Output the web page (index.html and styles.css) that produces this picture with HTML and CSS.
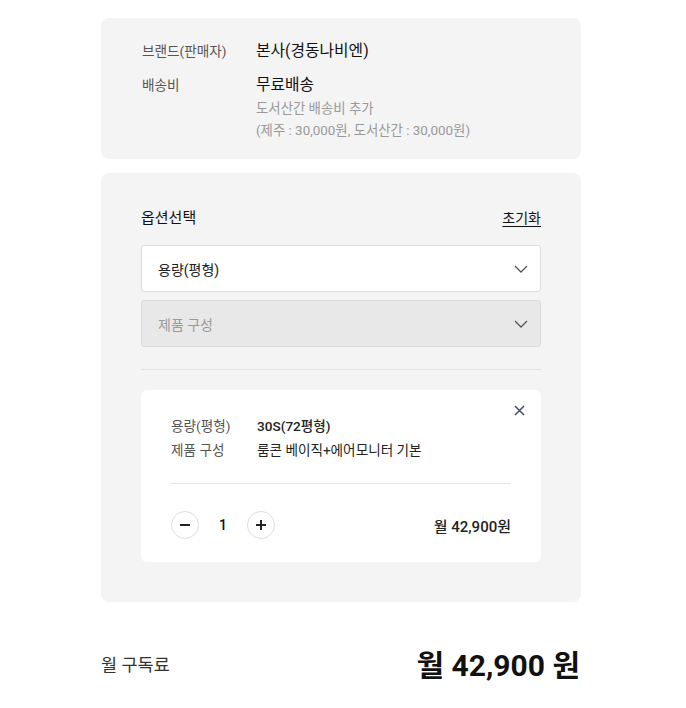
FILE: index.html
```html
<!DOCTYPE html>
<html lang="ko">
<head>
    <meta charset="UTF-8">
    <meta name="viewport" content="width=device-width, initial-scale=1.0">
    <title>구독 옵션</title>
    <link rel="stylesheet" href="styles.css">
</head>
<body>
    <div class="container">
        <!-- 판매자 / 배송 정보 -->
        <div class="info-box">
            <div class="info-row">
                <span class="info-label">브랜드(판매자)</span>
                <div class="info-value">
                    <p class="value-main">본사(경동나비엔)</p>
                </div>
            </div>
            <div class="info-row">
                <span class="info-label">배송비</span>
                <div class="info-value">
                    <p class="value-main">무료배송</p>
                    <p class="value-sub">도서산간 배송비 추가</p>
                    <p class="value-sub">(제주 : 30,000원, 도서산간 : 30,000원)</p>
                </div>
            </div>
        </div>

        <!-- 옵션 선택 -->
        <div class="option-box">
            <div class="option-head">
                <h3 class="option-title">옵션선택</h3>
                <a href="#" class="reset-link">초기화</a>
            </div>
            <div class="select-list">
                <button class="select">
                    <span>용량(평형)</span>
                    <svg class="chevron" width="14" height="8" viewBox="0 0 14 8"><path d="M1 1l6 6 6-6" fill="none" stroke="#555" stroke-width="1.3"/></svg>
                </button>
                <button class="select select-disabled">
                    <span>제품 구성</span>
                    <svg class="chevron" width="14" height="8" viewBox="0 0 14 8"><path d="M1 1l6 6 6-6" fill="none" stroke="#555" stroke-width="1.3"/></svg>
                </button>
            </div>

            <div class="selected-item">
                <button class="remove-btn" aria-label="삭제">
                    <svg width="11" height="11" viewBox="0 0 11 11"><path d="M1 1l9 9M10 1l-9 9" stroke="#3d4f6b" stroke-width="1.5"/></svg>
                </button>
                <dl class="item-spec">
                    <dt>용량(평형)</dt>
                    <dd class="spec-strong">30S(72평형)</dd>
                    <dt>제품 구성</dt>
                    <dd>룸콘 베이직+에어모니터 기본</dd>
                </dl>
                <div class="item-foot">
                    <div class="qty">
                        <button class="qty-btn">
                            <svg width="12" height="12" viewBox="0 0 12 12"><path d="M1 6h10" stroke="#222" stroke-width="2"/></svg>
                        </button>
                        <span class="qty-num">1</span>
                        <button class="qty-btn">
                            <svg width="12" height="12" viewBox="0 0 12 12"><path d="M1 6h10M6 1v10" stroke="#222" stroke-width="2"/></svg>
                        </button>
                    </div>
                    <span class="item-price">월 42,900원</span>
                </div>
            </div>
        </div>

        <!-- 합계 -->
        <div class="total">
            <span class="total-label">월 구독료</span>
            <span class="total-price">월 42,900 원</span>
        </div>
    </div>
</body>
</html>
```

FILE: styles.css
```css
body {
    font-family: Roboto, "Noto Sans CJK KR", sans-serif;
    background-color: #ffffff;
    color: #111;
    margin: 0;
    padding: 0;
}

p, h3, dl, dd {
    margin: 0;
}

.container {
    width: 480px;
    margin: 18px 0 0 101px;
}

/* 판매자 정보 */
.info-box {
    background-color: #f4f4f4;
    border-radius: 8px;
    padding: 22px 40px 17px 41px;
    display: flex;
    flex-direction: column;
    gap: 12px;
}

.info-row {
    display: flex;
}

.info-label {
    width: 114px;
    font-size: 13.6px;
    line-height: 22px;
    color: #555;
}

.value-main {
    font-size: 15.8px;
    line-height: 22px;
    color: #111;
}

.value-sub {
    font-size: 13.4px;
    line-height: 22px;
    color: #999;
}

.value-main + .value-sub {
    margin-top: 2px;
}

/* 옵션 선택 */
.option-box {
    background-color: #f4f4f4;
    border-radius: 8px;
    margin-top: 14px;
    padding: 34px 40px 40px;
}

.option-head {
    display: flex;
    justify-content: space-between;
    align-items: center;
    line-height: 22px;
}

.option-title {
    font-size: 15px;
    font-weight: 400;
    color: #111;
}

.reset-link {
    font-size: 14px;
    color: #111;
    text-decoration: underline;
    text-underline-offset: 3px;
}

.select-list {
    display: flex;
    flex-direction: column;
    gap: 8px;
    margin-top: 16px;
    padding-bottom: 22px;
    border-bottom: 1px solid #e2e2e2;
}

.select {
    display: flex;
    justify-content: space-between;
    align-items: center;
    height: 47px;
    padding: 0 12px 0 16px;
    background-color: #fff;
    border: 1px solid #dcdcdc;
    border-radius: 3px;
    font-family: inherit;
    font-size: 14px;
    color: #222;
    text-align: left;
    cursor: pointer;
}

.select-disabled {
    background-color: #e8e8e8;
    color: #999;
}

/* 선택된 옵션 */
.selected-item {
    position: relative;
    margin-top: 20px;
    background-color: #fff;
    border-radius: 6px;
    padding: 24px 30px 23px 30px;
}

.remove-btn {
    position: absolute;
    top: 15px;
    right: 16px;
    border: none;
    background: none;
    padding: 0;
    cursor: pointer;
    display: flex;
}

.item-spec {
    display: grid;
    grid-template-columns: 86px 1fr;
    font-size: 13.6px;
    line-height: 24px;
}

.item-spec dt {
    color: #555;
}

.item-spec dd {
    color: #222;
}

.item-spec .spec-strong {
    font-weight: 500;
}

.item-foot {
    display: flex;
    justify-content: space-between;
    align-items: center;
    margin-top: 21px;
    padding-top: 27px;
    border-top: 1px solid #e4e4e4;
}

.qty {
    display: flex;
    align-items: center;
}

.qty-btn {
    width: 28px;
    height: 28px;
    border-radius: 50%;
    border: 1px solid #dedede;
    background: #fff;
    display: flex;
    align-items: center;
    justify-content: center;
    padding: 0;
    cursor: pointer;
}

.qty-num {
    width: 48px;
    text-align: center;
    font-size: 14px;
    font-weight: 500;
}

.item-price {
    font-size: 15px;
    font-weight: 500;
    color: #222;
}

/* 합계 */
.total {
    display: flex;
    justify-content: space-between;
    align-items: center;
    margin-top: 39px;
}

.total-label {
    font-size: 17.5px;
    color: #333;
}

.total-price {
    font-size: 30px;
    font-weight: 700;
    color: #111;
    margin-right: 1px;
}
```
